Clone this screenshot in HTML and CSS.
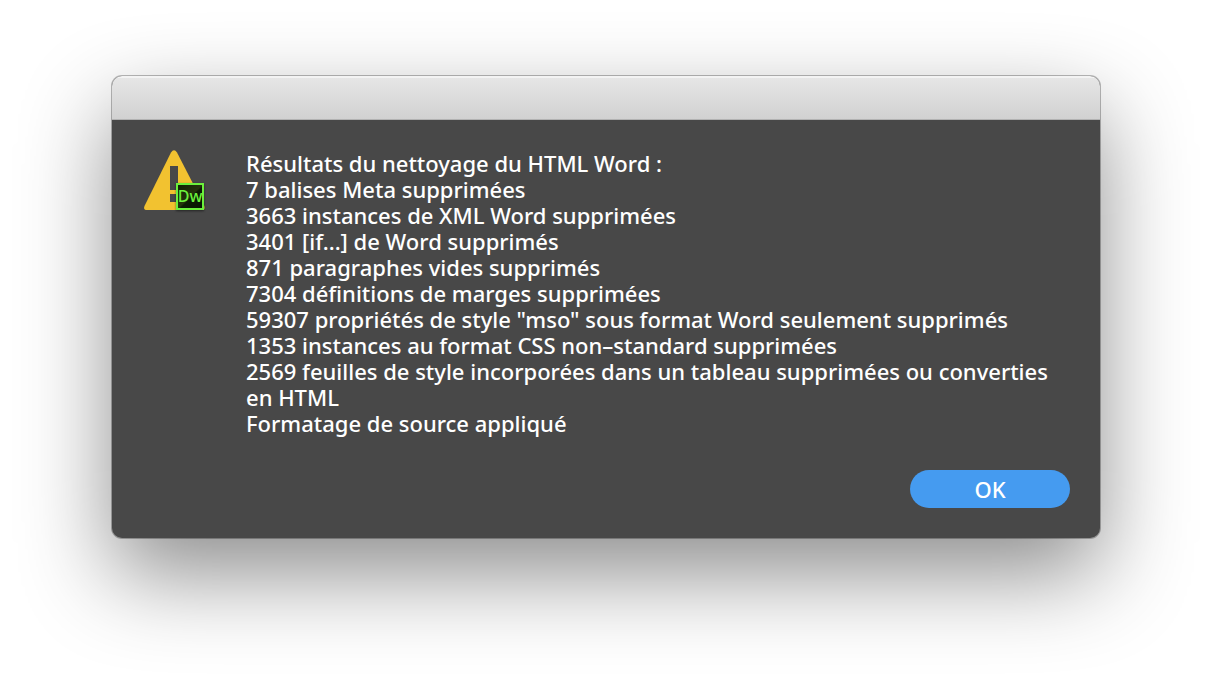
FILE: index.html
```html
<!DOCTYPE html>
<html lang="fr">
<head>
<meta charset="utf-8">
<title>Dreamweaver</title>
<link rel="stylesheet" href="styles.css">
</head>
<body>
<main class="dialog" role="alertdialog" aria-label="Dreamweaver" aria-describedby="message">
  <header class="titlebar"></header>
  <div class="content">
    <svg class="icon" viewBox="0 0 64 64" aria-hidden="true">
      <defs>
        <linearGradient id="badge" x1="0" y1="0" x2="1" y2="1">
          <stop offset="0" stop-color="#101f04"/>
          <stop offset="0.5" stop-color="#25330c"/>
          <stop offset="0.55" stop-color="#0c1a04"/>
          <stop offset="1" stop-color="#071502"/>
        </linearGradient>
      </defs>
      <path d="M27 2.5Q30 -2 33 2.5L60 55Q62 60 58 60H3Q-1 60 0.5 56Z" fill="#f2c230"/>
      <path d="M26 16h8v24h-8zM26 44h8v8h-8z" fill="#484848"/>
      <rect class="badge" x="33" y="34" width="26" height="25" fill="url(#badge)" stroke="#6bf03c" stroke-width="2"/>
      <text class="badge-text" x="46" y="52" text-anchor="middle">Dw</text>
    </svg>
    <div class="message" id="message">
      <p>Résultats du nettoyage du HTML Word :</p>
      <p>7 balises Meta supprimées</p>
      <p>3663 instances de XML Word supprimées</p>
      <p>3401 [if...] de Word supprimés</p>
      <p>871 paragraphes vides supprimés</p>
      <p>7304 définitions de marges supprimées</p>
      <p>59307 propriétés de style "mso" sous format Word seulement supprimés</p>
      <p>1353 instances au format CSS non–standard supprimées</p>
      <p>2569 feuilles de style incorporées dans un tableau supprimées ou converties en HTML</p>
      <p>Formatage de source appliqué</p>
    </div>
  </div>
  <footer class="actions">
    <button class="ok" type="button">OK</button>
  </footer>
</main>
</body>
</html>
```
FILE: styles.css
```css
* { box-sizing: border-box; }

body {
  min-height: 100vh;
  margin: 0;
  padding: 76px 112px;
  background: #fff;
  color: #fff;
  font-family: "Noto Sans", "Open Sans", sans-serif;
}

.dialog {
  overflow: hidden;
  border-radius: 10px;
  background: #484848;
  box-shadow: 0 0 0 1px rgba(0, 0, 0, 0.27), 0 36px 90px rgba(0, 0, 0, 0.45);
}

.titlebar {
  height: 44px;
  border-top: 2px solid #f3f3f3;
  border-bottom: 1px solid #b2b2b2;
  background: linear-gradient(#e6e6e6, #d1d1d1);
}

.content {
  display: flex;
  align-items: flex-start;
  gap: 38px;
  padding: 30px 30px 0 32px;
}

.icon {
  flex: none;
  width: 64px;
  height: 64px;
}

.badge { filter: drop-shadow(0 1px 1px rgba(0, 0, 0, 0.5)); }

.badge-text {
  fill: #6bf03c;
  font-size: 16px;
  font-weight: 500;
}

.message {
  flex: 1;
  font-size: 22px;
  font-weight: 550;
  line-height: 26px;
}

.message p { margin: 0; }

.actions {
  display: flex;
  justify-content: flex-end;
  padding: 34px 30px 30px;
}

.ok {
  width: 160px;
  height: 38px;
  padding: 0;
  border: 0;
  border-radius: 19px;
  background: #459bf0;
  color: #fff;
  font-family: inherit;
  font-size: 22px;
  font-weight: 500;
  line-height: 38px;
}
```
